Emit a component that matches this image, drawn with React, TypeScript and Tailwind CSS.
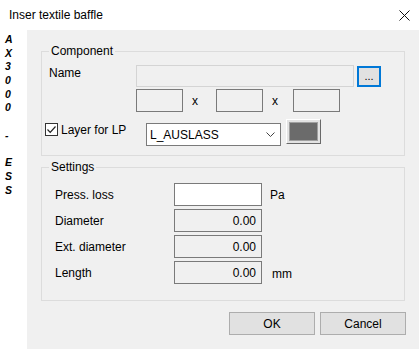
import React from 'react'

const font = { fontFamily: '"Liberation Sans", Arial, sans-serif' }

const sideLetters = ['A', 'X', '3', '0', '0', '0', '', '-', '', 'E', 'S', 'S']

export default function App() {
  return (
    <div className="w-[419px] h-[349px] bg-white text-[12px] leading-[16px] text-black flex flex-col" style={font}>
      {/* title bar */}
      <div className="h-[30px] flex items-center justify-between pl-[9px] pr-[9px] shrink-0">
        <span>Inser textile baffle</span>
        <svg width="11" height="11" viewBox="0 0 11 11">
          <path d="M0.5 0.5 L10.5 10.5 M10.5 0.5 L0.5 10.5" stroke="#111" strokeWidth="1" />
        </svg>
      </div>

      <div className="flex flex-1">
        {/* vertical side label */}
        <div className="w-[27px] shrink-0 pl-[5px] pt-[3px] flex flex-col">
          {sideLetters.map((c, i) => (
            <span key={i} className="h-[13.7px] leading-[13.7px] text-[10.5px] font-bold italic">
              {c}
            </span>
          ))}
        </div>

        <div className="flex-1 bg-[#f0f0f0] px-[14px] flex flex-col">
          {/* Component group */}
          <fieldset className="mt-[13px] border border-[#dcdcdc] pb-[9px]">
            <legend className="ml-[7px] px-[2px] leading-[16px]">Component</legend>
            <div className="pt-[6px] flex items-start">
              <span className="w-[94px] pl-[7px]">Name</span>
              <div className="w-[218px] h-[22px] border border-[#d4d4d4] bg-[#f0f0f0]" />
              <button className="ml-[3px] mt-[1px] w-[24px] h-[21px] border-2 border-[#0078d7] bg-[#e1e1e1] text-[11px] leading-[12px] flex items-end justify-center pb-[3px]">
                ...
              </button>
            </div>
            <div className="mt-[2px] flex items-center pl-[94px]">
              <div className="w-[47px] h-[23px] border border-[#7a7a7a] bg-[#f0f0f0]" />
              <span className="w-[33px] pl-[9px]">x</span>
              <div className="w-[47px] h-[23px] border border-[#7a7a7a] bg-[#f0f0f0]" />
              <span className="w-[30px] pl-[9px]">x</span>
              <div className="w-[47px] h-[23px] border border-[#7a7a7a] bg-[#f0f0f0]" />
            </div>
            <div className="mt-[7px] flex items-start">
              <label className="w-[104px] pl-[3px] mt-[2px] flex items-center gap-[3px]">
                <span className="w-[13px] h-[13px] border border-[#333] bg-white flex items-center justify-center">
                  <svg width="11" height="11" viewBox="0 0 11 11">
                    <path d="M1.5 5.5 L4.2 8.3 L9.5 2.5" fill="none" stroke="#222" strokeWidth="1.2" />
                  </svg>
                </span>
                <span className="mt-[1px]">Layer for LP</span>
              </label>
              <div className="mt-[4px] w-[135px] h-[23px] border border-[#7a7a7a] bg-white flex items-center justify-between pl-[3px] pr-[5px]">
                <span>L_AUSLASS</span>
                <svg width="9" height="6" viewBox="0 0 9 6">
                  <path d="M0.5 0.5 L4.5 4.5 L8.5 0.5" fill="none" stroke="#444" strokeWidth="1" />
                </svg>
              </div>
              <button className="ml-[5px] w-[35px] h-[25px] border border-t-white border-l-white border-r-[#696969] border-b-[#696969] bg-[#e3e3e3] p-[2px]">
                <div className="w-full h-full bg-[#6b6b6b] border border-[#a0a0a0]" />
              </button>
            </div>
          </fieldset>

          {/* Settings group */}
          <fieldset className="mt-[3px] border border-[#dcdcdc] pt-[8px] pb-[16px] flex flex-col gap-[3px]">
            <legend className="ml-[7px] px-[2px] leading-[16px]">Settings</legend>
            <SettingRow label="Press. loss" white unit="Pa" />
            <SettingRow label="Diameter" value="0.00" />
            <SettingRow label="Ext. diameter" value="0.00" />
            <SettingRow label="Length" value="0.00" unit="mm" unitGap />
          </fieldset>

          <div className="mt-[11px] flex justify-end gap-[5px]">
            <button className="w-[86px] h-[23px] border border-[#adadad] bg-[#e1e1e1]">OK</button>
            <button className="w-[86px] h-[23px] border border-[#adadad] bg-[#e1e1e1] mr-[-1px]">Cancel</button>
          </div>
        </div>
      </div>
    </div>
  )
}

function SettingRow({ label, value, white, unit, unitGap }: { label: string; value?: string; white?: boolean; unit?: string; unitGap?: boolean }) {
  return (
    <div className="flex items-center">
      <span className="w-[132px] pl-[13px]">{label}</span>
      <div
        className={
          white
            ? 'w-[88px] h-[23px] border border-[#7a7a7a] bg-white'
            : 'w-[88px] h-[23px] border border-[#7a7a7a] bg-[#f0f0f0] flex items-center justify-end pr-[5px]'
        }
      >
        {value}
      </div>
      {unit && <span className={unitGap ? 'ml-[10px] mt-[2px]' : 'ml-[8px]'}>{unit}</span>}
    </div>
  )
}
